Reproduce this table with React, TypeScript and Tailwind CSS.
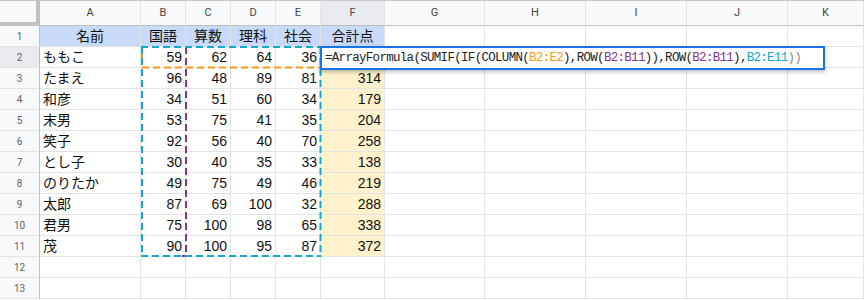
import React from "react";

const COLS = ["A", "B", "C", "D", "E", "F", "G", "H", "I", "J", "K"];

const DATA: (string | number)[][] = [
  ["ももこ", 59, 62, 64, 36, ""],
  ["たまえ", 96, 48, 89, 81, 314],
  ["和彦", 34, 51, 60, 34, 179],
  ["末男", 53, 75, 41, 35, 204],
  ["笑子", 92, 56, 40, 70, 258],
  ["とし子", 30, 40, 35, 33, 138],
  ["のりたか", 49, 75, 49, 46, 219],
  ["太郎", 87, 69, 100, 32, 288],
  ["君男", 75, 100, 98, 65, 338],
  ["茂", 90, 100, 95, 87, 372],
];

const HEAD = ["名前", "国語", "算数", "理科", "社会", "合計点"];

const cellFont = { fontFamily: '"Liberation Sans", "Noto Sans CJK JP", Arial, sans-serif' };

function RowHeader({ n, selected }: { n: number; selected?: boolean }) {
  return (
    <div
      className={`flex items-center justify-center border-r border-b border-r-[#c0c0c0] border-b-[#e2e3e3] text-[10px] text-[#5f6368] ${
        selected ? "bg-[#e8eaed]" : "bg-[#f8f9fa]"
      }`}
      style={{ fontFamily: "Roboto, Arial, sans-serif" }}
    >
      {n}
    </div>
  );
}

function Cell({
  children,
  align = "left",
  bg = "",
}: {
  children?: React.ReactNode;
  align?: "left" | "right" | "center";
  bg?: string;
}) {
  const a = align === "left" ? "justify-start pl-[3px]" : align === "right" ? "justify-end pr-[3px]" : "justify-center";
  return (
    <div
      className={`flex items-end pb-[1px] overflow-hidden whitespace-nowrap border-r border-b border-[#e2e3e3] text-[14px] leading-[18px] text-[#111] ${a} ${bg}`}
      style={cellFont}
    >
      {children}
    </div>
  );
}

export default function App() {
  const rows: React.ReactNode[] = [];

  rows.push(
    <div
      key="corner"
      className="bg-[#f8f9fa] border-r-4 border-b-4 border-[#c0c0c0] border-t border-t-[#c7c7c7]"
    />
  );
  COLS.forEach((c) => {
    rows.push(
      <div
        key={"h" + c}
        className={`flex items-center justify-center border-r border-b border-r-[#e2e3e3] border-b-[#c0c0c0] border-t border-t-[#c7c7c7] text-[11px] text-[#444746] ${
          c === "F" ? "bg-[#e8eaed]" : "bg-[#f8f9fa]"
        }`}
        style={{ fontFamily: "Roboto, Arial, sans-serif" }}
      >
        {c}
      </div>
    );
  });

  rows.push(<RowHeader key="r1" n={1} />);
  HEAD.forEach((h, i) => {
    rows.push(
      <Cell key={"r1c" + i} align="center" bg="bg-[#c9daf8]">
        {h}
      </Cell>
    );
  });
  for (let i = 6; i < COLS.length; i++) rows.push(<Cell key={"r1c" + i} />);

  DATA.forEach((r, ri) => {
    const n = ri + 2;
    rows.push(<RowHeader key={"r" + n} n={n} selected={n === 2} />);
    r.forEach((v, ci) => {
      rows.push(
        <Cell
          key={`r${n}c${ci}`}
          align={ci === 0 ? "left" : "right"}
          bg={ci === 5 ? "bg-[#fff2cc]" : ""}
        >
          {v}
        </Cell>
      );
    });
    for (let i = 6; i < COLS.length; i++) rows.push(<Cell key={`r${n}c${i}`} />);
  });

  for (let n = 12; n <= 13; n++) {
    rows.push(<RowHeader key={"r" + n} n={n} />);
    for (let i = 0; i < COLS.length; i++) rows.push(<Cell key={`r${n}c${i}`} />);
  }

  const dash = "7 4";

  return (
    <div className="relative w-[864px] h-[300px] overflow-hidden bg-white">
      <div className="grid grid-cols-[40px_101px_45px_45px_45px_45px_64px_100px_101px_101px_101px_1fr] grid-rows-[26px_repeat(13,21px)]">
        {rows}
      </div>

      <svg className="absolute left-0 top-0 pointer-events-none" width={864} height={300}>
        {/* orange B2:E2 */}
        <line x1={142} y1={67.5} x2={321} y2={67.5} stroke="#f7981d" strokeWidth={2} strokeDasharray={dash} />
        <line x1={142} y1={47} x2={142} y2={68} stroke="#f7981d" strokeWidth={2} strokeDasharray="0 7 4 20" />
        {/* purple B2:B11 */}
        <line x1={186} y1={47} x2={186} y2={256} stroke="#7e3794" strokeWidth={2} strokeDasharray={dash} />
        <line x1={142} y1={256} x2={186} y2={256} stroke="#7e3794" strokeWidth={2} strokeDasharray="0 40 6 10" />
        {/* cyan B2:E11 */}
        <line x1={141} y1={47} x2={321} y2={47} stroke="#11a9cc" strokeWidth={2} strokeDasharray={dash} />
        <line x1={142} y1={47} x2={142} y2={257} stroke="#11a9cc" strokeWidth={2} strokeDasharray={dash} />
        <line x1={320.5} y1={47} x2={320.5} y2={257} stroke="#11a9cc" strokeWidth={2} strokeDasharray={dash} />
        <line x1={141} y1={256} x2={321} y2={256} stroke="#11a9cc" strokeWidth={2} strokeDasharray={dash} />
      </svg>

      <div className="absolute left-[320px] top-[46px] w-[505px] h-[24px] border-2 border-[#1a73e8] bg-white shadow-[0_2px_4px_rgba(0,0,0,0.25)] flex items-center pl-[3px]">
        <span
          className="text-[12.5px] tracking-[-0.7px] text-[#222] whitespace-nowrap"
          style={{ fontFamily: '"Liberation Mono", "DejaVu Sans Mono", monospace' }}
        >
          =ArrayFormula(SUMIF(IF(COLUMN(<span className="text-[#f7981d]">B2:E2</span>),ROW(
          <span className="text-[#7e3794]">B2:B11</span>)),ROW(<span className="text-[#7e3794]">B2:B11</span>),
          <span className="text-[#11a9cc]">B2:E11</span>
          <span className="text-[#888]">))</span>
        </span>
      </div>
    </div>
  );
}
